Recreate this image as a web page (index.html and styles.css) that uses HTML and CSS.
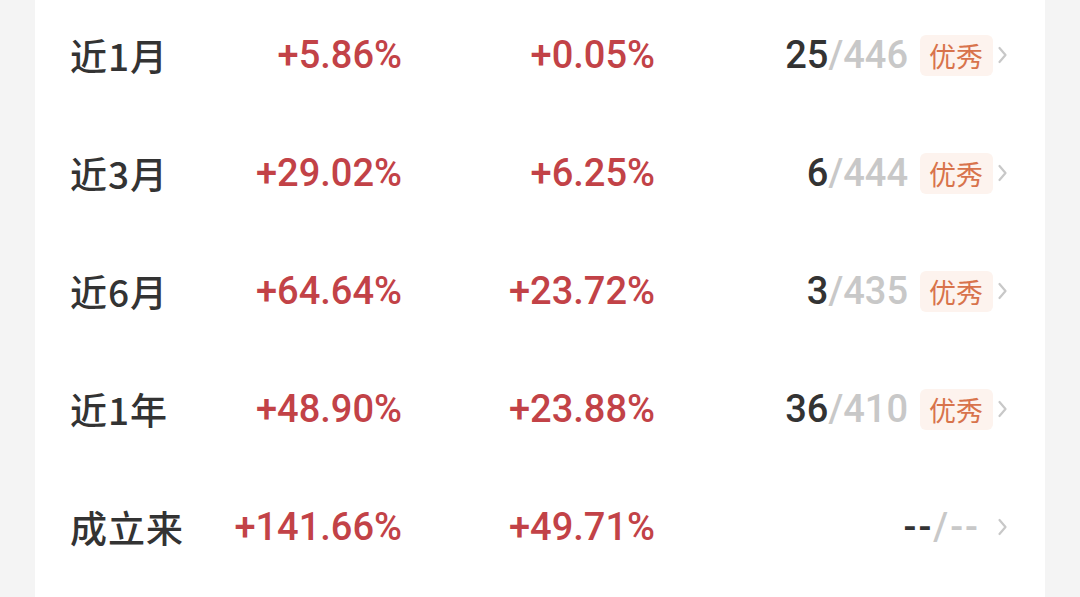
FILE: index.html
```html
<!DOCTYPE html>
<html lang="zh">
<head>
<meta charset="utf-8">
<link rel="stylesheet" href="styles.css">
</head>
<body>
<div class="card">
  <div class="row">
    <div class="label">近1月</div>
    <div class="num">+5.86%</div>
    <div class="num">+0.05%</div>
    <div class="rank"><span class="r1">25</span><span class="r2">/446</span><span class="badge">优秀</span><svg class="chev" viewBox="0 0 10 20"><path d="M2 3 L8 10 L2 17"/></svg></div>
  </div>
  <div class="row">
    <div class="label">近3月</div>
    <div class="num">+29.02%</div>
    <div class="num">+6.25%</div>
    <div class="rank"><span class="r1">6</span><span class="r2">/444</span><span class="badge">优秀</span><svg class="chev" viewBox="0 0 10 20"><path d="M2 3 L8 10 L2 17"/></svg></div>
  </div>
  <div class="row">
    <div class="label">近6月</div>
    <div class="num">+64.64%</div>
    <div class="num">+23.72%</div>
    <div class="rank"><span class="r1">3</span><span class="r2">/435</span><span class="badge">优秀</span><svg class="chev" viewBox="0 0 10 20"><path d="M2 3 L8 10 L2 17"/></svg></div>
  </div>
  <div class="row">
    <div class="label">近1年</div>
    <div class="num">+48.90%</div>
    <div class="num">+23.88%</div>
    <div class="rank"><span class="r1">36</span><span class="r2">/410</span><span class="badge">优秀</span><svg class="chev" viewBox="0 0 10 20"><path d="M2 3 L8 10 L2 17"/></svg></div>
  </div>
  <div class="row">
    <div class="label">成立来</div>
    <div class="num">+141.66%</div>
    <div class="num">+49.71%</div>
    <div class="rank"><span class="r1 dash">--</span><span class="r2 dash">/--</span><svg class="chev chev-wide" viewBox="0 0 10 20"><path d="M2 3 L8 10 L2 17"/></svg></div>
  </div>
</div>
</body>
</html>
```
FILE: styles.css
```css
html, body {
  margin: 0;
  padding: 0;
  background: #f4f4f4;
  height: 100%;
  overflow: hidden;
}
.card {
  margin: -4px 35px 0 35px;
  background: #ffffff;
  padding: 0 37px 0 35px;
  height: 620px;
}
.row {
  height: 118px;
  display: grid;
  grid-template-columns: 130px 202px 253px 1fr;
  align-items: center;
}
.label {
  font-family: "Noto Sans CJK SC", sans-serif;
  font-weight: 500;
  font-size: 37px;
  letter-spacing: 1px;
  color: #333333;
}
.num {
  font-family: Roboto, "Liberation Sans", sans-serif;
  font-weight: 500;
  font-size: 38px;
  color: #c24247;
  text-align: right;
}
.rank {
  display: flex;
  align-items: center;
  justify-content: flex-end;
  font-family: Roboto, "Liberation Sans", sans-serif;
  font-weight: 500;
  font-size: 38px;
}
.r1 { color: #333333; }
.r2 { color: #c8c8c8; }
.dash { letter-spacing: 2px; }
.badge {
  margin-left: 12px;
  height: 41px;
  padding: 0 10px 0 9px;
  display: flex;
  align-items: center;
  background: #fdf3ee;
  border-radius: 6px;
  color: #d8734c;
  font-family: "Noto Sans CJK SC", sans-serif;
  font-weight: 400;
  font-size: 27px;
}
.chev {
  width: 11px;
  height: 20px;
  margin-left: 4px;
  fill: none;
  stroke: #c8c8c8;
  stroke-width: 2.2;
  stroke-linecap: round;
  stroke-linejoin: round;
}
.chev-wide { margin-left: 17px; }
```
